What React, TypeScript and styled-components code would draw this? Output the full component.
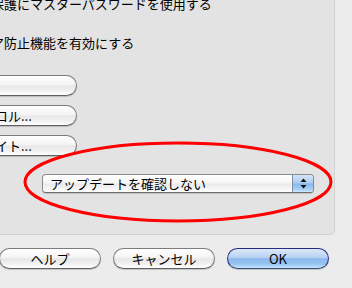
import styled, { createGlobalStyle } from 'styled-components';

const GlobalStyle = createGlobalStyle`
  html, body {
    margin: 0;
    padding: 0;
    background: #ececec;
  }
`;

const Window = styled.div`
  position: relative;
  width: 352px;
  height: 288px;
  overflow: hidden;
  background: #ececec;
  font-family: 'Noto Sans CJK JP', 'Noto Sans', sans-serif;
  font-size: 13px;
  color: #000;
  display: flex;
  flex-direction: column;
`;

const Panel = styled.div`
  box-sizing: border-box;
  width: 335px;
  height: 235px;
  flex-shrink: 0;
  background: #e3e3e3;
  border-right: 1px solid #d2d2d2;
  border-bottom: 1px solid #d2d2d2;
  border-bottom-right-radius: 5px;
  display: flex;
  flex-direction: column;
`;

const CheckLine = styled.div<{ $top: number }>`
  margin-top: ${(p) => p.$top}px;
  margin-left: -9px;
  line-height: 13px;
  white-space: nowrap;
`;

const SideButtons = styled.div`
  margin-top: 26px;
  margin-left: -60px;
  display: flex;
  flex-direction: column;
  gap: 9px;
`;

const AquaButton = styled.div<{ $primary?: boolean }>`
  box-sizing: border-box;
  height: 21px;
  border-radius: 11px;
  border: 1px solid ${(p) => (p.$primary ? '#2a2a80' : '#7c7c7c')};
  border-bottom-color: ${(p) => (p.$primary ? '#3a4d7a' : '#5f5f5f')};
  background: ${(p) =>
    p.$primary
      ? 'linear-gradient(to bottom, #dce9f9 0%, #b6d1f3 45%, #8bb7ec 52%, #98c6f2 80%, #c7e5ff 100%)'
      : 'linear-gradient(to bottom, #ffffff 0%, #f4f4f4 45%, #e7e7e7 52%, #f2f2f2 80%, #ffffff 100%)'};
  box-shadow: 0 1px 1px rgba(0, 0, 0, 0.18);
  display: flex;
  align-items: center;
  line-height: 13px;
  white-space: nowrap;
`;

const SideButton = styled(AquaButton)`
  width: 137px;
  padding-left: 15px;
`;

const Popup = styled.div`
  box-sizing: border-box;
  margin-top: 18px;
  margin-left: 42px;
  width: 272px;
  height: 19px;
  border: 1px solid #8a8a8a;
  border-bottom-color: #6e6e6e;
  border-radius: 4px;
  background: linear-gradient(to bottom, #ffffff 0%, #f6f6f6 45%, #eaeaea 55%, #f7f7f7 85%, #ffffff 100%);
  box-shadow: 0 1px 1px rgba(0, 0, 0, 0.15);
  display: flex;
  align-items: stretch;
  overflow: hidden;
`;

const PopupLabel = styled.div`
  flex: 1;
  padding-left: 7px;
  display: flex;
  align-items: center;
  line-height: 13px;
  white-space: nowrap;
`;

const PopupArrows = styled.div`
  width: 20px;
  border-left: 1px solid #7f8fa8;
  background: linear-gradient(to bottom, #d6e6f8 0%, #a9cbf0 48%, #86b6ec 52%, #a6d0f6 85%, #cfeaff 100%);
  display: flex;
  align-items: center;
  justify-content: center;
`;

const Footer = styled.div`
  margin-top: 13px;
  margin-left: -1px;
  display: flex;
  gap: 12px;
`;

const FooterButton = styled(AquaButton)`
  width: 102px;
  justify-content: center;
`;

const Annotation = styled.svg`
  position: absolute;
  left: 0;
  top: 0;
  pointer-events: none;
`;

export default function App() {
  return (
    <>
      <GlobalStyle />
      <Window>
        <Panel>
          <CheckLine $top={-3}>保護にマスターパスワードを使用する</CheckLine>
          <CheckLine $top={26}>ア防止機能を有効にする</CheckLine>
          <SideButtons>
            <SideButton>表示...</SideButton>
            <SideButton>プロトコル...</SideButton>
            <SideButton>例外サイト...</SideButton>
          </SideButtons>
          <Popup>
            <PopupLabel>アップデートを確認しない</PopupLabel>
            <PopupArrows>
              <svg width="7" height="11" viewBox="0 0 7 11">
                <path d="M3.5 0.5 L6.5 4 L0.5 4 Z" fill="#111" />
                <path d="M0.5 7 L6.5 7 L3.5 10.5 Z" fill="#111" />
              </svg>
            </PopupArrows>
          </Popup>
        </Panel>
        <Footer>
          <FooterButton>ヘルプ</FooterButton>
          <FooterButton>キャンセル</FooterButton>
          <FooterButton $primary>OK</FooterButton>
        </Footer>
        <Annotation width="352" height="288" viewBox="0 0 352 288">
          <ellipse cx="178" cy="182" rx="153" ry="39" fill="none" stroke="#f00" strokeWidth="3" />
        </Annotation>
      </Window>
    </>
  );
}
